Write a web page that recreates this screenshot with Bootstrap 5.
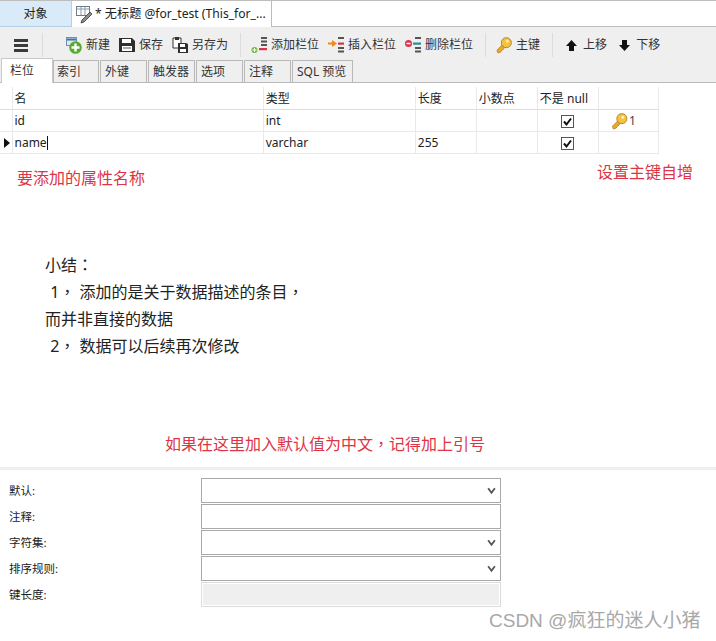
<!DOCTYPE html>
<html lang="zh">
<head>
<meta charset="utf-8">
<title>无标题</title>
<link href="https://cdn.jsdelivr.net/npm/bootstrap@5.3.0/dist/css/bootstrap.min.css" rel="stylesheet">
<style>
html,body{height:641px;overflow:hidden}
body{font-family:"Noto Sans","Noto Sans CJK SC",sans-serif;font-size:12px;line-height:16px;color:#222;background:#fff;width:716px;position:relative}
.win-tabs{height:27px;border-top:1px solid #bdbdbd;border-bottom:1px solid #bdbdbd}
.win-tab{height:26px;display:flex;align-items:center;justify-content:center;margin-bottom:-1px}
.win-obj{width:72px;background:#d9ebf9;border-right:1px solid #b5cfe6;border-bottom:1px solid #b5cfe6}
.win-doc{width:200px;background:#fff;border-right:1px solid #bdbdbd;gap:2px;padding-left:4px;justify-content:flex-start;white-space:nowrap;font-size:12.15px}
.tool-zone{height:56px;background:#efefef;border-bottom:1px solid #b9b9b9}
.tool-row{height:31px;padding-top:5px}
.t-item{display:flex;align-items:center;gap:4px;white-space:nowrap;font-size:12px;color:#333;margin-left:9px}
.t-sep{width:1px;height:24px;background:#dcdcdc;margin-left:12px}
.t-sep + .t-item{margin-left:10px}
.t-sep.after-burger{margin-left:14px}
.t-sep.after-burger + .t-item{margin-left:23px}
.t-item.t-up{margin-left:13px;gap:6px}
.t-item.t-down{margin-left:12px;gap:6px}
.burger{width:14px;height:13px;border-top:3px solid #3a3a3a;border-bottom:3px solid #3a3a3a;position:relative;margin-left:14px}
.burger::after{content:"";position:absolute;left:0;right:0;top:2px;height:3px;background:#3a3a3a}
.sub-tabs{height:24px;padding-left:1px;gap:1px;align-items:flex-end;flex-wrap:nowrap}
.sub-tab{height:22px;width:47px;background:#efefef;border:1px solid #b9b9b9;border-bottom:0;display:flex;align-items:center;padding-left:4px;color:#333}
.sub-on{width:52px;background:#fff;height:25px;border-color:#c9c9c9;padding:0 0 1px 8px;position:relative;z-index:1;margin-bottom:-1px;margin-right:-1px}
.sub-on + .sub-tab{width:46px;padding-left:3px}
.sub-sql{width:61px}
.grid-wrap{padding-top:4px}
.grid-tb{width:659px;table-layout:fixed;margin:0;font-size:12px;border-collapse:collapse;color:#222}
.grid-tb td,.grid-tb th{height:22px;padding:1px 2px 0;border:1px solid #e9e9e9;border-top:0;font-weight:400;vertical-align:middle;line-height:20px;overflow:hidden;white-space:nowrap}
.grid-tb thead th{padding-top:2px;border-bottom-color:#dedede}
.grid-tb tr>*:first-child{border-left:0;border-right:1px solid #e9e9e9;padding:0}
.c-gut{width:12px}.c-name{width:251px}.c-type{width:152px}.c-n{width:61px}.c-last{width:60px}
.caret-mark{display:block;width:0;height:0;border-left:6px solid #111;border-top:5px solid transparent;border-bottom:5px solid transparent;margin-left:4px}
.text-caret{display:inline-block;width:1px;height:14px;background:#111;vertical-align:-3px}
.chk{display:block;width:13px;height:13px;margin:0 auto}
.grid-tb td.key-cell{padding-left:12px;color:#444}
.key-num{margin-left:1px}
.note-zone{height:313px}
.note-red{color:#dc3545;font-size:16px;line-height:20px}
.note-top{padding:14px 23px 0 17px}
.note-second{margin-top:-6px}
.summary{font-size:16px;line-height:27px;padding-left:45px;margin-top:64px;color:#222;height:114px}
.p-mark{font-family:"Noto Sans CJK TC",sans-serif;line-height:1}
.indent-num{padding-left:1px}
.note-mid{margin-top:68px;padding-left:165px}
.form-zone{border-top:3px solid #efefef;padding-top:8px}
.f-row{height:26px;display:flex;align-items:flex-start;padding-left:9px}
.f-label{width:192px;font-size:11.5px;line-height:25px;color:#222}
.f-field{width:300px;height:25px;border:1px solid #a9a9a9;border-radius:0;padding:0 4px;font-size:12px;box-shadow:none}
select.f-field{background-image:url("data:image/svg+xml,%3Csvg xmlns='http://www.w3.org/2000/svg' viewBox='0 0 8 8'%3E%3Cpath d='M1 2l3 4 3-4' fill='none' stroke='%23555' stroke-width='1.600'/%3E%3C/svg%3E");background-position:right 4px center;background-size:9px 9px}
.f-field:disabled{background:#efefef;border:1px solid #dcdcdc;box-shadow:inset 0 0 0 1px #fff}
.wm{position:absolute;left:489px;top:609px;font-family:"Liberation Sans","Noto Sans CJK SC",sans-serif;color:#a8a8a8;font-size:19px;line-height:24px;white-space:nowrap}
</style>
</head>
<body>
<div class="win-tabs d-flex">
  <div class="win-tab win-obj">对象</div>
  <div class="win-tab win-doc">
    <svg width="17" height="19" viewBox="0 0 17 19"><rect x=".5" y="1.5" width="13" height="9" fill="#fff" stroke="#6f7d8a"/><path d="M1 4h12M5 2v8M9 2v8" stroke="#8f9ba8"/><path d="M14 7l2 2-8 8-3 1 1-3z" fill="#8c8c8c" stroke="#555"/></svg>
    <span>* 无标题 @for_test (This_for_...</span>
  </div>
</div>
<div class="tool-zone">
  <div class="tool-row d-flex align-items-center">
    <span class="burger"></span>
    <span class="t-sep after-burger"></span>
    <span class="t-item">
      <svg width="16" height="17" viewBox="0 0 16 17"><rect x="0.500" y="0.500" width="10" height="8" fill="#dfe7f0" stroke="#6d8fb3"/><path d="M1 2.500h9" stroke="#3e74ad" stroke-width="2"/><circle cx="9.500" cy="10.500" r="6.300" fill="#57ab2f"/><path d="M9.500 6.500v8M5.500 10.500h8" stroke="#fff" stroke-width="2.400"/></svg>
      新建</span>
    <span class="t-item">
      <svg width="16" height="16" viewBox="0 0 16 16"><path d="M0 1h13l3 3v11H0z" fill="#2f2f2f"/><rect x="3" y="2" width="9" height="4" fill="#fff"/><rect x="3" y="9" width="10" height="5" fill="#fff"/><path d="M4 11h8" stroke="#555"/></svg>
      保存</span>
    <span class="t-item">
      <svg width="16" height="17" viewBox="0 0 16 17"><path d="M1 1h8v10H1z" fill="#fff" stroke="#333"/><path d="M3 0h4v3H3z" fill="#333"/><path d="M6 6h8l2 1v9H6z" fill="#2f2f2f"/><rect x="8" y="7" width="5" height="3" fill="#fff"/><rect x="8" y="12" width="6" height="3" fill="#fff"/></svg>
      另存为</span>
    <span class="t-sep"></span>
    <span class="t-item">
      <svg width="16" height="16" viewBox="0 0 16 16"><path d="M10 0h6v2h-6zM10 3.500h6v2h-6zM10 7h6v2h-6z" fill="#555"/><path d="M8 11h8v2.200H8z" fill="#d8344a"/><circle cx="3.500" cy="13" r="3" fill="#6dbb3c"/><path d="M3.500 11v4M1.500 13h4" stroke="#fff"/></svg>
      添加栏位</span>
    <span class="t-item">
      <svg width="16" height="16" viewBox="0 0 16 16"><path d="M10 0h6v2h-6zM10 10h6v2h-6zM10 13.500h6v2h-6z" fill="#555"/><path d="M10 5.500h6v2.200h-6z" fill="#d8344a"/><path d="M0 5.500h4V3l5 3.500L4 10V7.500H0z" fill="#ee8a1d"/></svg>
      插入栏位</span>
    <span class="t-item">
      <svg width="16" height="16" viewBox="0 0 16 16"><path d="M10 0h6v2h-6zM10 10h6v2h-6zM10 13.500h6v2h-6z" fill="#555"/><path d="M8 5.500h8v2.200H8z" fill="#2c8c9c"/><circle cx="3.500" cy="6.500" r="3.500" fill="#d8344a"/><path d="M1.500 6.500h4" stroke="#fff" stroke-width="1.500"/></svg>
      删除栏位</span>
    <span class="t-sep"></span>
    <span class="t-item">
      <svg width="16" height="17" viewBox="0 0 17 18"><path d="M7 8L1 14l1 3 3-1 1-2 2-1 1-2" fill="#e9a82a" stroke="#b57e16" stroke-width=".8"/><circle cx="11" cy="6" r="5.300" fill="#f5c344" stroke="#b57e16"/><circle cx="12" cy="4.500" r="1.500" fill="#fff1b8"/></svg>
      主键</span>
    <span class="t-sep"></span>
    <span class="t-item t-up">
      <svg width="11" height="11" viewBox="0 0 11 11"><path d="M5.500 0L11 6H8v5H3V6H0z" fill="#111"/></svg>
      上移</span>
    <span class="t-item t-down">
      <svg width="11" height="11" viewBox="0 0 11 11"><path d="M5.500 11L0 5h3V0h5v5h3z" fill="#111"/></svg>
      下移</span>
  </div>
  <div class="sub-tabs d-flex">
    <div class="sub-tab sub-on">栏位</div>
    <div class="sub-tab">索引</div>
    <div class="sub-tab">外键</div>
    <div class="sub-tab">触发器</div>
    <div class="sub-tab">选项</div>
    <div class="sub-tab">注释</div>
    <div class="sub-tab sub-sql">SQL 预览</div>
  </div>
</div>
<div class="grid-wrap">
  <table class="grid-tb">
    <colgroup><col class="c-gut"><col class="c-name"><col class="c-type"><col class="c-n"><col class="c-n"><col class="c-n"><col class="c-last"></colgroup>
    <thead><tr><th></th><th>名</th><th>类型</th><th>长度</th><th>小数点</th><th>不是 null</th><th></th></tr></thead>
    <tbody>
      <tr><td></td><td>id</td><td>int</td><td></td><td></td>
        <td><svg class="chk" viewBox="0 0 13 13"><rect x=".5" y=".5" width="12" height="12" fill="#fff" stroke="#555"/><path d="M3 6.500l2.500 3L10 3.500" fill="none" stroke="#111" stroke-width="2"/></svg></td>
        <td class="key-cell"><svg width="17" height="17" viewBox="0 0 17 18" class="align-middle"><path d="M7 8L1 14l1 3 3-1 1-2 2-1 1-2" fill="#e9a82a" stroke="#b57e16" stroke-width=".8"/><circle cx="11" cy="6" r="5.300" fill="#f5c344" stroke="#b57e16"/><circle cx="12" cy="4.500" r="1.500" fill="#fff1b8"/></svg><span class="key-num">1</span></td></tr>
      <tr><td><span class="caret-mark"></span></td><td>name<span class="text-caret"></span></td><td>varchar</td><td>255</td><td></td>
        <td><svg class="chk" viewBox="0 0 13 13"><rect x=".5" y=".5" width="12" height="12" fill="#fff" stroke="#555"/><path d="M3 6.500l2.500 3L10 3.500" fill="none" stroke="#111" stroke-width="2"/></svg></td>
        <td></td></tr>
    </tbody>
  </table>
</div>
<div class="note-zone">
  <div class="note-top d-flex justify-content-between align-items-start">
    <span class="note-red">要添加的属性名称</span>
    <span class="note-red note-second">设置主键自增</span>
  </div>
  <div class="summary">
    <div>小结<span class="p-mark" lang="zh-TW">：</span></div>
    <div class="indent-num">&nbsp;1<span class="p-mark" lang="zh-TW">，</span> 添加的是关于数据描述的条目<span class="p-mark" lang="zh-TW">，</span></div>
    <div>而并非直接的数据</div>
    <div class="indent-num">&nbsp;2<span class="p-mark" lang="zh-TW">，</span> 数据可以后续再次修改</div>
  </div>
  <div class="note-red note-mid">如果在这里加入默认值为中文<span class="p-mark" lang="zh-TW">，</span>记得加上引号</div>
</div>
<div class="form-zone">
  <div class="f-row"><span class="f-label">默认:</span><select class="form-select f-field"><option></option></select></div>
  <div class="f-row"><span class="f-label">注释:</span><input class="form-control f-field" type="text"></div>
  <div class="f-row"><span class="f-label">字符集:</span><select class="form-select f-field"><option></option></select></div>
  <div class="f-row"><span class="f-label">排序规则:</span><select class="form-select f-field"><option></option></select></div>
  <div class="f-row"><span class="f-label">键长度:</span><input class="form-control f-field" type="text" disabled></div>
</div>
<div class="wm">CSDN @疯狂的迷人小猪</div>
<script src="https://cdn.jsdelivr.net/npm/bootstrap@5.3.0/dist/js/bootstrap.bundle.min.js"></script>
</body>
</html>
